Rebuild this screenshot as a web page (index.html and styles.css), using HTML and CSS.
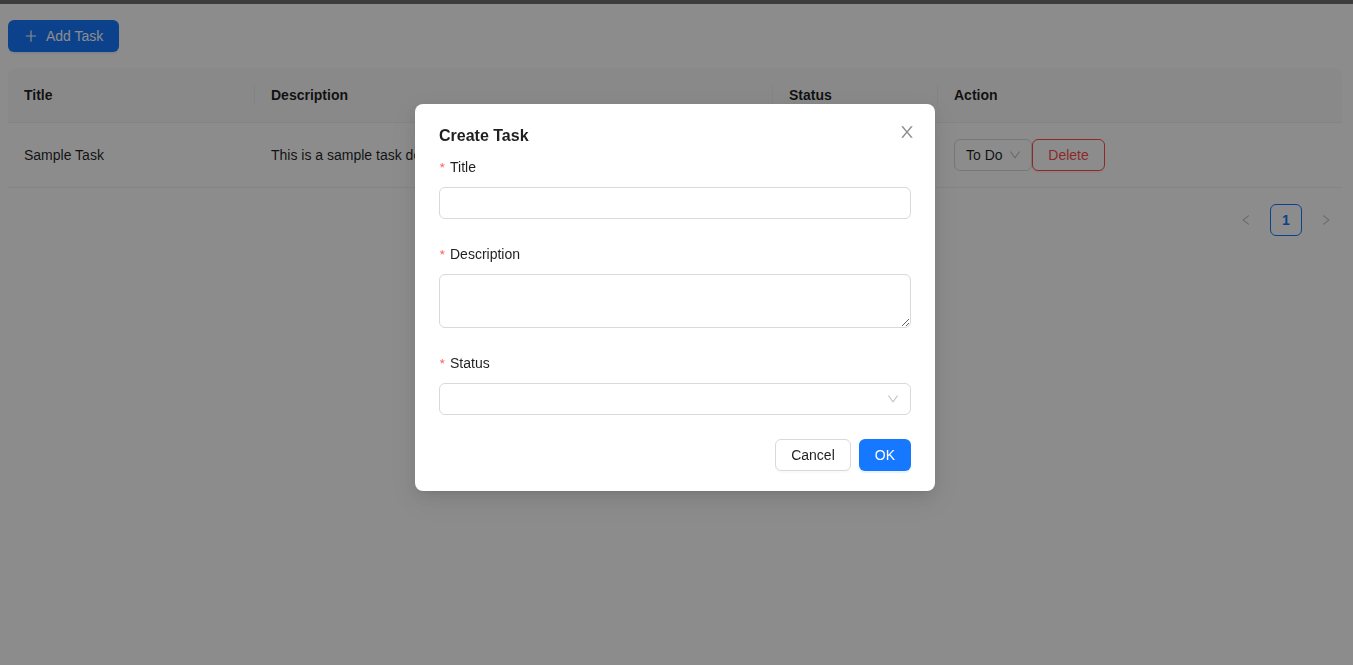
FILE: index.html
```html
<!DOCTYPE html>
<html lang="en">
<head>
<meta charset="utf-8">
<title>Tasks</title>
<link rel="stylesheet" href="styles.css">
</head>
<body>
<div class="topbar"></div>
<div class="page">
  <div class="toolbar">
    <button class="btn btn-primary">
      <svg class="icon14" viewBox="64 64 896 896" fill="currentColor"><path d="M482 152h60q8 0 8 8v704q0 8-8 8h-60q-8 0-8-8V160q0-8 8-8z"/><path d="M192 474h640q8 0 8 8v60q0 8-8 8H192q-8 0-8-8v-60q0-8 8-8z"/></svg>
      <span>Add Task</span>
    </button>
  </div>
  <table class="table">
    <colgroup>
      <col class="c1"><col class="c2"><col class="c3"><col class="c4">
    </colgroup>
    <thead>
      <tr><th>Title</th><th>Description</th><th>Status</th><th>Action</th></tr>
    </thead>
    <tbody>
      <tr>
        <td>Sample Task</td>
        <td>This is a sample task description.</td>
        <td></td>
        <td>
          <div class="actions">
            <div class="select small-select">
              <span class="select-value">To Do</span>
              <svg class="arrow" viewBox="64 64 896 896" fill="currentColor"><path d="M884 256h-75c-5.1 0-9.9 2.5-12.9 6.6L512 654.2 227.9 262.6c-3-4.1-7.8-6.6-12.9-6.6h-75c-6.5 0-10.3 7.4-6.5 12.7l352.6 486.1c12.8 17.6 39 17.6 51.7 0l352.6-486.1c3.9-5.3.1-12.7-6.4-12.7z"/></svg>
            </div>
            <button class="btn btn-danger">Delete</button>
          </div>
        </td>
      </tr>
    </tbody>
  </table>
  <div class="pagination">
    <span class="page-nav">
      <svg class="icon12" viewBox="64 64 896 896" fill="currentColor"><path d="M724 218.3V141c0-6.7-7.7-10.4-12.9-6.3L260.3 486.8a31.86 31.86 0 000 50.3l450.8 352.1c5.3 4.1 12.9.4 12.9-6.3v-77.3c0-4.9-2.3-9.6-6.1-12.6l-360-281 360-281.1c3.8-3 6.1-7.7 6.1-12.6z"/></svg>
    </span>
    <span class="page-item active">1</span>
    <span class="page-nav">
      <svg class="icon12" viewBox="64 64 896 896" fill="currentColor"><path d="M765.7 486.8L314.9 134.7A7.97 7.97 0 00302 141v77.3c0 4.9 2.3 9.6 6.1 12.6l360 281.1-360 281.1c-3.9 3-6.1 7.7-6.1 12.6V883c0 6.6 7.6 10.3 12.9 6.3l450.8-352.1a31.96 31.96 0 000-50.4z"/></svg>
    </span>
  </div>
</div>

<div class="mask"></div>
<div class="modal-wrap">
  <div class="modal">
    <button class="modal-close" aria-label="Close">
      <svg viewBox="64 64 896 896" fill="currentColor"><path d="M563.8 512l262.5-312.9c4.4-5.2.7-13.1-6.1-13.1h-79.8c-4.7 0-9.2 2.1-12.3 5.7L511.6 449.8 295.1 191.7c-3-3.6-7.5-5.7-12.3-5.7H203c-6.8 0-10.5 7.9-6.1 13.1L459.4 512 196.9 824.9A7.95 7.95 0 00203 838h79.8c4.7 0 9.2-2.1 12.3-5.7l216.5-258.1 216.5 258.1c3 3.6 7.5 5.7 12.3 5.7h79.8c6.8 0 10.5-7.9 6.1-13.1L563.8 512z"/></svg>
    </button>
    <div class="modal-title">Create Task</div>
    <form class="form">
      <div class="form-item">
        <label class="form-label"><span class="req">*</span><span>Title</span></label>
        <input class="input" type="text">
      </div>
      <div class="form-item">
        <label class="form-label"><span class="req">*</span><span>Description</span></label>
        <textarea class="input textarea" rows="2"></textarea>
      </div>
      <div class="form-item">
        <label class="form-label"><span class="req">*</span><span>Status</span></label>
        <div class="select">
          <span class="select-value"></span>
          <svg class="arrow" viewBox="64 64 896 896" fill="currentColor"><path d="M884 256h-75c-5.1 0-9.9 2.5-12.9 6.6L512 654.2 227.9 262.6c-3-4.1-7.8-6.6-12.9-6.6h-75c-6.5 0-10.3 7.4-6.5 12.7l352.6 486.1c12.8 17.6 39 17.6 51.7 0l352.6-486.1c3.9-5.3.1-12.7-6.4-12.7z"/></svg>
        </div>
      </div>
    </form>
    <div class="modal-footer">
      <button class="btn btn-default">Cancel</button>
      <button class="btn btn-primary">OK</button>
    </div>
  </div>
</div>
</body>
</html>
```
FILE: styles.css
```css
* { box-sizing: border-box; }
html, body { margin: 0; padding: 0; }
body {
  font-family: "Liberation Sans", Arial, sans-serif;
  font-size: 14px;
  line-height: 22px;
  color: rgba(0, 0, 0, 0.88);
  background: #fff;
  height: 665px;
  overflow: hidden;
}
.topbar { height: 4px; background: #707070; }
.page { padding: 16px 11px 0 8px; }
.toolbar { display: flex; margin-bottom: 16px; }

.btn {
  display: inline-flex;
  align-items: center;
  justify-content: center;
  gap: 8px;
  height: 32px;
  padding: 4px 15px;
  border-radius: 6px;
  border: 1px solid transparent;
  font-family: inherit;
  font-size: 14px;
  line-height: 22px;
  cursor: pointer;
  white-space: nowrap;
}
.btn-primary { background: #1677ff; color: #fff; box-shadow: 0 2px 0 rgba(5, 145, 255, 0.1); }
.btn-default { background: #fff; color: rgba(0, 0, 0, 0.88); border-color: #d9d9d9; box-shadow: 0 2px 0 rgba(0, 0, 0, 0.02); }
.btn-danger { background: #fff; color: #ff4d4f; border-color: #ff4d4f; box-shadow: 0 2px 0 rgba(255, 38, 5, 0.06); min-width: 73px; }
.icon14 { width: 14px; height: 14px; display: block; }
.icon12 { width: 12px; height: 12px; display: block; }

.table {
  width: 100%;
  border-collapse: separate;
  border-spacing: 0;
  table-layout: fixed;
  text-align: left;
}
.c1 { width: 247px; }
.c2 { width: 518px; }
.c3 { width: 165px; }
.table th {
  position: relative;
  padding: 16px;
  background: #fafafa;
  font-weight: 600;
  line-height: 22px;
  border-bottom: 1px solid #f0f0f0;
}
.table th:first-child { border-top-left-radius: 8px; }
.table th:last-child { border-top-right-radius: 8px; }
.table th:not(:last-child)::before {
  content: "";
  position: absolute;
  right: 0;
  top: 50%;
  width: 1px;
  height: 1.6em;
  transform: translateY(-50%);
  background: #f0f0f0;
}
.table td {
  padding: 16px;
  border-bottom: 1px solid #f0f0f0;
  white-space: nowrap;
  overflow: hidden;
  line-height: 22px;
}
.actions { display: flex; align-items: center; }

.select {
  display: flex;
  align-items: center;
  height: 32px;
  padding: 0 11px;
  border: 1px solid #d9d9d9;
  border-radius: 6px;
  background: #fff;
}
.select .select-value { flex: 1; }
.select .arrow { width: 12px; height: 12px; color: rgba(0, 0, 0, 0.25); flex: none; }
.small-select { width: 78px; }
.small-select .select-value { flex: none; width: 43px; }

.pagination {
  display: flex;
  justify-content: flex-end;
  gap: 8px;
  margin-top: 16px;
}
.page-nav, .page-item {
  display: flex;
  align-items: center;
  justify-content: center;
  min-width: 32px;
  height: 32px;
  border-radius: 6px;
}
.page-nav { color: rgba(0, 0, 0, 0.25); }
.page-item.active {
  border: 1px solid #1677ff;
  color: #1677ff;
  font-weight: 600;
  background: #fff;
}

.mask {
  position: fixed;
  inset: 0;
  background: rgba(0, 0, 0, 0.45);
}
.modal-wrap {
  position: fixed;
  top: 104px;
  left: 0;
  right: 3px;
  display: flex;
  justify-content: center;
}
.modal {
  position: relative;
  width: 520px;
  background: #fff;
  border-radius: 8px;
  padding: 20px 24px;
  box-shadow: 0 6px 16px 0 rgba(0, 0, 0, 0.08), 0 3px 6px -4px rgba(0, 0, 0, 0.12), 0 9px 28px 8px rgba(0, 0, 0, 0.05);
}
.modal-close {
  position: absolute;
  top: 17px;
  right: 17px;
  width: 22px;
  height: 22px;
  padding: 0;
  border: 0;
  background: transparent;
  color: rgba(0, 0, 0, 0.45);
  display: flex;
  align-items: center;
  justify-content: center;
}
.modal-close svg { width: 16px; height: 16px; display: block; }
.modal-title {
  font-size: 16px;
  font-weight: 600;
  line-height: 24px;
  margin-bottom: 8px;
}
.form { margin: 0; }
.form-item { display: flex; flex-direction: column; margin-bottom: 24px; }
.form-label { padding-bottom: 9px; height: 31px; display: flex; align-items: flex-start; }
.req {
  display: inline-block;
  width: 7px;
  height: 22px;
  margin-right: 4px;
  overflow: hidden;
  color: #ff7072;
  font-size: 14px;
  line-height: 25px;
  font-family: "Noto Sans CJK SC", sans-serif;
}
.input {
  display: block;
  width: 100%;
  height: 32px;
  padding: 4px 11px;
  border: 1px solid #d9d9d9;
  border-radius: 6px;
  font-family: inherit;
  font-size: 14px;
  line-height: 22px;
  color: rgba(0, 0, 0, 0.88);
  background: #fff;
  outline: none;
}
.textarea { height: 54px; resize: vertical; }
.modal-footer {
  display: flex;
  justify-content: flex-end;
  gap: 8px;
}
```
